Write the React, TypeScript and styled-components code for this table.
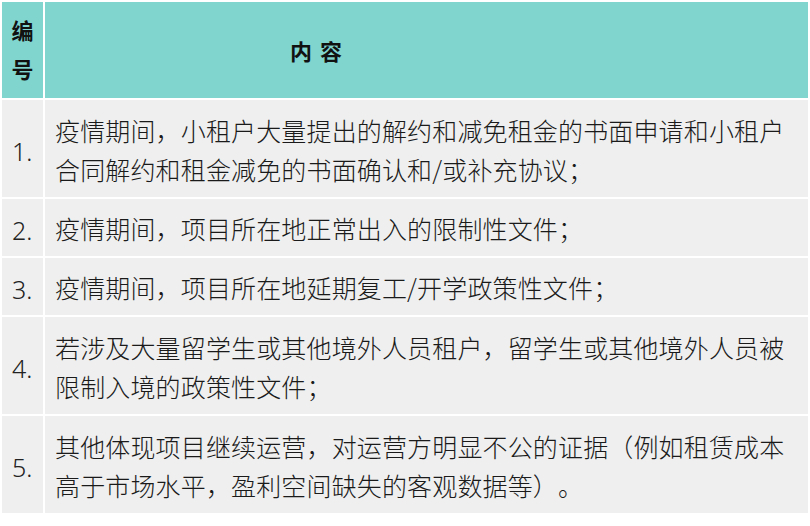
import React from 'react';
import styled, { createGlobalStyle } from 'styled-components';

const GlobalStyle = createGlobalStyle`
  html, body {
    margin: 0;
    padding: 0;
    background: #ffffff;
  }
  body {
    font-family: 'Noto Sans', 'Noto Sans CJK SC', sans-serif;
    color: #1c1c1c;
  }
`;

const Table = styled.div`
  display: grid;
  grid-template-columns: 41px 1fr;
  grid-auto-rows: auto;
  gap: 2px;
  padding: 2px;
  width: 810px;
  box-sizing: border-box;
  background: #ffffff;
`;

const HeadCell = styled.div<{ $wide?: boolean }>`
  background: #80d5cf;
  height: 96px;
  display: flex;
  align-items: center;
  justify-content: ${(p) => (p.$wide ? 'flex-start' : 'center')};
  padding-left: ${(p) => (p.$wide ? '245px' : '0')};
  font-family: 'Noto Sans CJK SC', sans-serif;
  font-weight: 700;
  font-size: 22px;
  line-height: 39px;
  color: #111;
  letter-spacing: ${(p) => (p.$wide ? '8px' : '0')};
  box-sizing: border-box;
`;

const Stack = styled.div`
  display: flex;
  flex-direction: column;
  align-items: center;
  margin-top: -2px;
`;

const NumCell = styled.div<{ $lines: number }>`
  background: #efefef;
  height: ${(p) => (p.$lines === 2 ? 97 : 57)}px;
  display: flex;
  align-items: center;
  padding-left: 10px;
  padding-top: 4px;
  box-sizing: border-box;
  font-family: 'Noto Sans', sans-serif;
  font-size: 25px;
  font-weight: 300;
  color: #222;
`;

const TextCell = styled.div<{ $lines: number }>`
  background: #efefef;
  height: ${(p) => (p.$lines === 2 ? 97 : 57)}px;
  display: flex;
  align-items: center;
  padding: 2px 8px 0 10px;
  box-sizing: border-box;
  font-family: 'Noto Sans CJK SC', sans-serif;
  font-size: 25px;
  font-weight: 300;
  letter-spacing: 0.15px;
  line-height: 39px;
  color: #1a1a1a;
  text-spacing-trim: space-all;
`;

const rows = [
  {
    n: '1.',
    lines: ['疫情期间，小租户大量提出的解约和减免租金的书面申请和小租户', '合同解约和租金减免的书面确认和/或补充协议；'],
  },
  { n: '2.', lines: ['疫情期间，项目所在地正常出入的限制性文件；'] },
  { n: '3.', lines: ['疫情期间，项目所在地延期复工/开学政策性文件；'] },
  {
    n: '4.',
    lines: ['若涉及大量留学生或其他境外人员租户，留学生或其他境外人员被', '限制入境的政策性文件；'],
  },
  {
    n: '5.',
    lines: ['其他体现项目继续运营，对运营方明显不公的证据（例如租赁成本', '高于市场水平，盈利空间缺失的客观数据等）。'],
  },
];

const App: React.FC = () => {
  return (
    <>
      <GlobalStyle />
      <Table>
        <HeadCell>
          <Stack>
            <span>编</span>
            <span>号</span>
          </Stack>
        </HeadCell>
        <HeadCell $wide>内容</HeadCell>
        {rows.map((row) => (
          <React.Fragment key={row.n}>
            <NumCell $lines={row.lines.length}>{row.n}</NumCell>
            <TextCell $lines={row.lines.length}>
              <div>
                {row.lines.map((line, i) => (
                  <div key={i}>{line}</div>
                ))}
              </div>
            </TextCell>
          </React.Fragment>
        ))}
      </Table>
    </>
  );
};

export default App;
